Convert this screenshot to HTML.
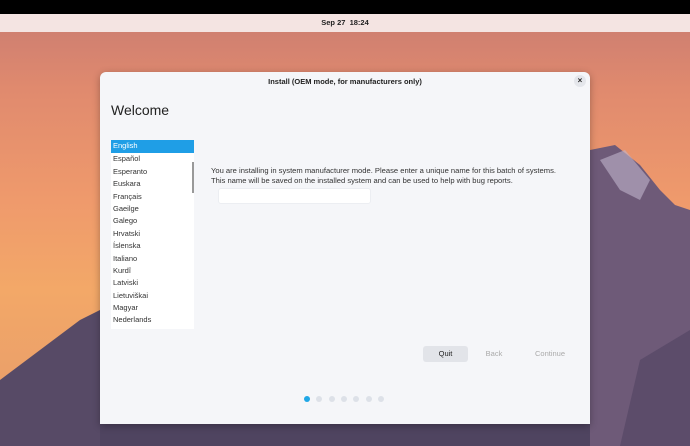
<!DOCTYPE html>
<html><head><meta charset="utf-8"><style>
*{margin:0;padding:0;box-sizing:border-box}
body{width:690px;height:446px;overflow:hidden;position:relative;font-family:"Liberation Sans",sans-serif;background:linear-gradient(180deg,#c77a72 0%,#e08a6e 20%,#ef9a6c 45%,#f3a868 65%,#e59a6a 100%)}
.top{position:absolute;left:0;top:0;width:690px;height:14px;background:#000}
.panel{position:absolute;left:0;top:14px;width:690px;height:18px;background:#f4e4e2;font-size:7.5px;font-weight:bold;color:#222;text-align:center;line-height:18px}
.win{position:absolute;left:100px;top:72px;width:490px;height:352px;background:#f5f6f9;border-radius:6px 6px 0 0;box-shadow:0 2px 8px rgba(0,0,0,.3)}
.title{position:absolute;top:5px;left:0;width:100%;text-align:center;font-size:7.5px;font-weight:bold;color:#222}
.close{position:absolute;right:4px;top:3px;width:12px;height:12px;border-radius:50%;background:#e4e6eb;font-size:8px;text-align:center;line-height:12px;color:#222;font-weight:bold}
.wel{position:absolute;left:11px;top:30px;font-size:14px;color:#222}
.list{position:absolute;left:11px;top:68px;width:83px;height:189px;background:#fff;padding-top:1px}
.list div{height:12.4px;line-height:12.4px;font-size:7.5px;padding-left:2px;color:#333}
.list .sel{background:#1f9ee6;color:#fff;margin-top:-1px;height:13.4px}
.sb{position:absolute;left:92px;top:90px;width:1.5px;height:31px;background:#999}
.txt{position:absolute;left:111px;top:94px;font-size:7.6px;line-height:9.5px;color:#333;white-space:nowrap}
.inp{position:absolute;left:118px;top:116px;width:153px;height:16px;background:#fff;border-radius:3px;border:1px solid #eceef2}
.btn{position:absolute;top:274px;height:16px;line-height:16px;font-size:7.5px;text-align:center}
.dots{position:absolute;top:324px;left:204px}
.dots span{position:absolute;top:0;width:6px;height:6px;border-radius:50%;background:#dde1e8}
</style></head><body>
<svg style="position:absolute;left:0;top:0" width="690" height="446">
<polygon fill="#6e5a78" points="590,150 615,145 640,165 660,190 675,205 690,210 690,446 590,446"/>
<polygon fill="#bfb4cc" opacity=".6" points="600,160 625,150 650,180 640,200 620,190"/>
<polygon fill="#574a66" points="0,446 0,380 40,350 80,320 100,310 100,446"/>
<polygon fill="#4f4460" points="100,424 590,424 590,446 100,446"/>
<polygon fill="#5c4c6a" points="640,360 690,330 690,446 620,446"/>
</svg>
<div class="top"></div>
<div class="panel">Sep 27&nbsp;&nbsp;18:24</div>
<div class="win">
<div class="title">Install (OEM mode, for manufacturers only)</div>
<div class="close">×</div>
<div class="wel">Welcome</div>
<div class="list">
<div class="sel">English</div><div>Español</div><div>Esperanto</div><div>Euskara</div><div>Français</div><div>Gaeilge</div><div>Galego</div><div>Hrvatski</div><div>Íslenska</div><div>Italiano</div><div>Kurdî</div><div>Latviski</div><div>Lietuviškai</div><div>Magyar</div><div>Nederlands</div>
</div>
<div class="sb"></div>
<div class="txt">You are installing in system manufacturer mode. Please enter a unique name for this batch of systems.<br>This name will be saved on the installed system and can be used to help with bug reports.</div>
<div class="inp"></div>
<div class="btn" style="left:323px;width:45px;background:#e2e4e9;border-radius:3px;color:#222">Quit</div>
<div class="btn" style="left:380px;width:28px;color:#aaa">Back</div>
<div class="btn" style="left:430px;width:40px;color:#aaa">Continue</div>
<div class="dots"><span style="left:0;background:#1fa7e6"></span><span style="left:12.3px"></span><span style="left:24.6px"></span><span style="left:36.9px"></span><span style="left:49.2px"></span><span style="left:61.5px"></span><span style="left:73.8px"></span></div>
</div>
</body></html>
